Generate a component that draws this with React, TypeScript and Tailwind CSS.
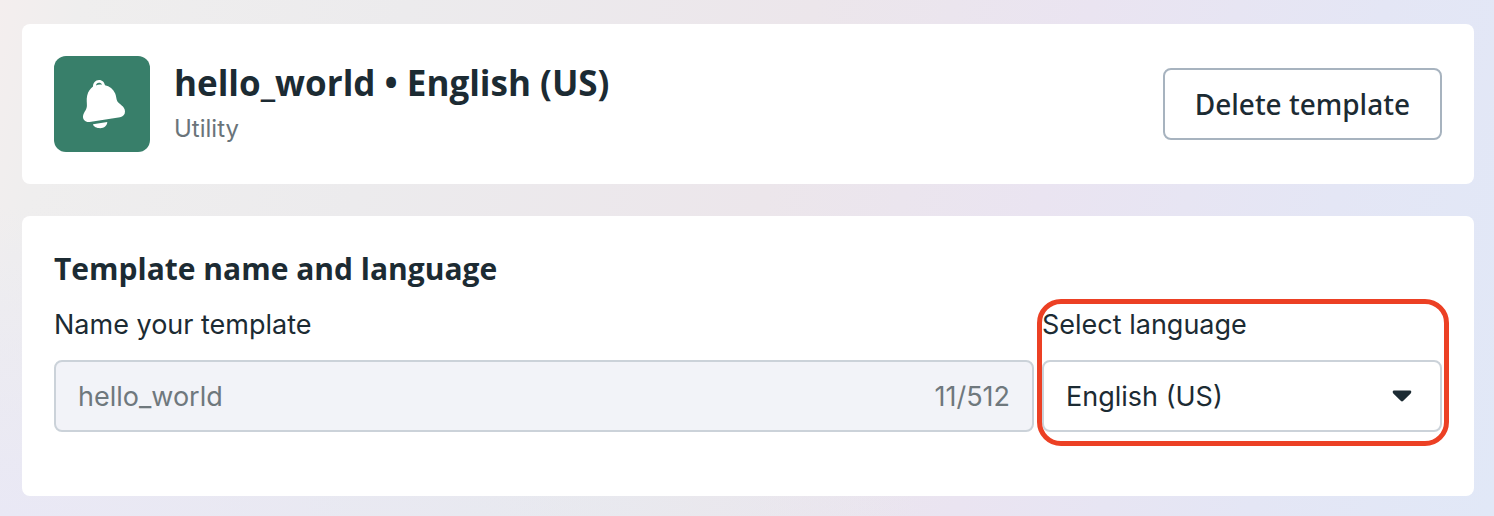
import { useState } from "react";

function BellIcon() {
  return (
    <svg viewBox="0 0 96 96" className="size-24" fill="#fff" aria-hidden="true">
      <path
        fillRule="evenodd"
        d="M39 30.6C39 27 41.300 24 45 24C48.500 24 50.300 26.300 51 29.300C55.500 30.200 59.300 33 61.200 37.500C62.300 40.200 62.200 43 63.300 45.300C64.800 48.200 71 50 71 55.500C71 58.600 69 60.700 66 61.300L35.500 66C31.500 66.500 28.700 63.800 29 60.300C29.300 56.500 32.600 54.300 32.900 50C33.100 47 32.200 43.500 33.200 39.500C34.200 35.500 36.300 32.500 39 30.600ZM41.900 29.500C43.800 28.500 46 28.300 48 28.700C47.400 27.300 46.400 26.700 45 26.700C43.300 26.700 42.200 27.900 41.900 29.500Z"
      />
      <path d="M39 68.300L53.300 66C53.200 69.500 50 72.200 46.200 72.200C42.700 72.200 39.500 70.800 39 68.300Z" />
    </svg>
  );
}

export default function App() {
  const [language, setLanguage] = useState("English (US)");

  return (
    <main className="flex min-h-screen flex-col gap-8 bg-[radial-gradient(ellipse_60%_60%_at_0%_100%,#e9e8f5_0%,transparent_100%),radial-gradient(ellipse_30%_50%_at_32%_100%,#e7eaec_0%,transparent_100%),linear-gradient(105deg,#f4eeee_0%,#efeeee_5%,#ecebed_25%,#ece6eb_50%,#eae4f1_67%,#e4e6f5_85%,#e1e8f7_100%)] pt-6 pr-5 pb-5 pl-[22px] font-['Inter',sans-serif] text-[#1c2b33]">
      <header className="flex items-center justify-between rounded-lg bg-white p-8">
        <div className="flex items-center gap-6">
          <div className="size-24 rounded-xl bg-[#387f6a]">
            <BellIcon />
          </div>
          <div className="flex flex-col">
            <h1 className="font-['Open_Sans',sans-serif] text-[35px] leading-[50px] font-bold">
              hello_world • English (US)
            </h1>
            <p className="text-2xl leading-[42px] text-[#6a747a]">Utility</p>
          </div>
        </div>
        <button
          type="button"
          className="h-18 rounded-lg border-2 border-[#a7b3bf] px-[30px] font-['Noto_Sans',sans-serif] text-[28px] leading-8 font-medium"
        >
          Delete template
        </button>
      </header>

      <section className="rounded-lg bg-white px-8 pt-8 pb-16">
        <h2 className="font-['Open_Sans',sans-serif] text-[30px] leading-[42px] font-bold">
          Template name and language
        </h2>
        <div className="mt-[18px] flex gap-2">
          <div className="flex min-w-0 flex-1 flex-col gap-[18px]">
            <label htmlFor="template-name" className="text-[27px] leading-[34px]">
              Name your template
            </label>
            <div className="flex h-18 items-center rounded-lg border-2 border-[#cbd2d9] bg-[#f2f3f8] px-[22px] text-[27px] text-[#6f787d]">
              <input
                id="template-name"
                type="text"
                defaultValue="hello_world"
                disabled
                className="min-w-0 flex-1 bg-transparent pt-0.5"
              />
              <span className="pt-0.5">11/512</span>
            </div>
          </div>

          <div className="relative flex w-[400px] flex-col gap-[18px]">
            <label htmlFor="template-language" className="text-[27px] leading-[34px]">
              Select language
            </label>
            <div className="relative">
              <select
                id="template-language"
                value={language}
                onChange={(event) => setLanguage(event.target.value)}
                className="h-18 w-full appearance-none rounded-lg border-2 border-[#cbd2d9] bg-white px-[22px] pt-0.5 text-[27px]"
              >
                <option>English (US)</option>
              </select>
              <svg
                viewBox="0 0 20 12"
                className="pointer-events-none absolute top-[30px] right-[30px] h-3 w-5"
                fill="#1c2b33"
                aria-hidden="true"
              >
                <path d="M2 .5H18C19.500 .5 19.700 2.400 18.700 3.400L11.300 10.800Q10 12 8.700 10.800L1.300 3.400C.3 2.400 .5 .5 2 .5Z" />
              </svg>
            </div>
            <div className="pointer-events-none absolute -top-[9px] -right-[7px] -bottom-3.5 -left-[5px] rounded-3xl border-[5px] border-[#ec4024]" />
          </div>
        </div>
      </section>
    </main>
  );
}
